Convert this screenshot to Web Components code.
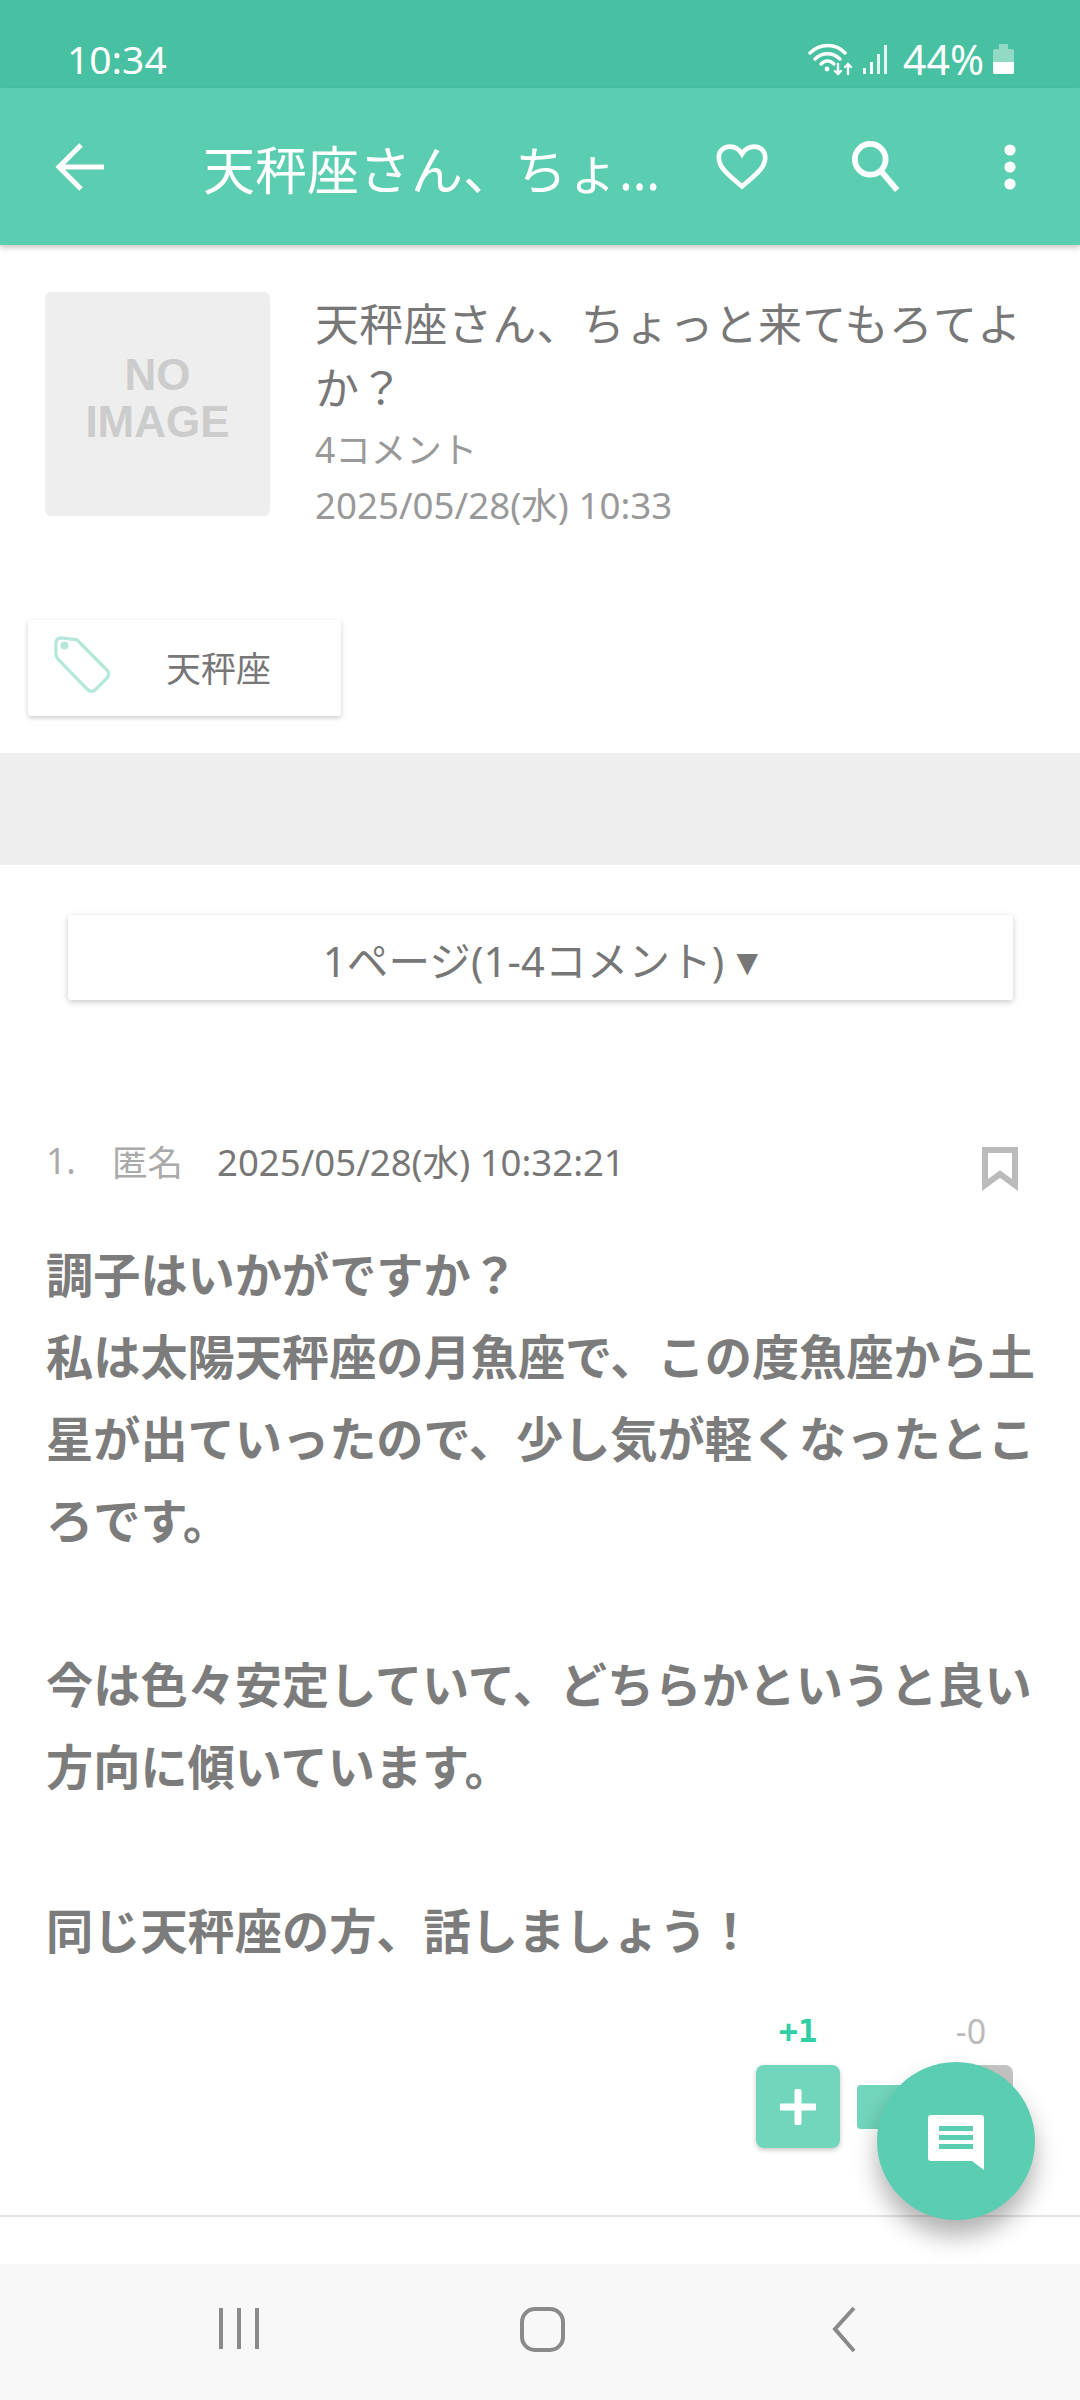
<!DOCTYPE html>
<html>
<head>
<meta charset="UTF-8">
<title>天秤座さん、ちょっと来てもろてよか？</title>
<style>
  html, body { margin: 0; padding: 0; }
  body {
    width: 1080px; height: 2400px; overflow: hidden; background: #fff; position: relative;
    display: flex; flex-direction: column;
    font-family: "Noto Sans", "Noto Sans CJK JP", sans-serif;
  }
</style>
<script type="module">
  // small helper, every element just sets its shadow markup
  class Base extends HTMLElement {
    constructor() {
      super();
      const template = document.createElement('template');
      template.innerHTML = this.constructor.markup;
      this.attachShadow({mode: 'open'});
      this.shadowRoot.appendChild(template.content.cloneNode(true));
    }
  }

  class StatusBar extends Base {
    static markup = `
      <style>
        :host { display: flex; height: 88px; box-sizing: border-box; padding: 0 65px 0 67px; align-items: center; justify-content: space-between; background: #47c1a1; color: #fff; }
        .time { font-size: 39px; padding-top: 29px; }
        .right { display: flex; align-items: center; padding-top: 29px; }
        .pct { font-size: 41px; margin: 0 8px 0 12px; }
        svg { display: block; }
      </style>
      <span class="time">10:34</span>
      <div class="right">
        <svg width="46" height="34" viewBox="0 0 46 34" fill="none" stroke="#fff" stroke-width="3.4" stroke-linecap="round">
          <path d="M2 11C12 1 28 1 37 11"/><path d="M7 17C14 10 25 10 32 17"/><path d="M13 22C17 18 22 18 26 22"/>
          <circle cx="19" cy="27" r="2.4" fill="#fff" stroke="none"/>
          <path stroke-width="2.4" d="M30 22V32M27 29l3 3 3-3M40 32V22M37 25l3-3 3 3"/>
        </svg>
        <svg width="30" height="34" viewBox="0 0 30 34" fill="#fff" style="margin-left:7px">
          <rect x="2" y="26" width="3" height="6" opacity=".9"/><rect x="9" y="20" width="3" height="12"/><rect x="16" y="12" width="3" height="20" opacity=".85"/><rect x="23" y="3" width="3" height="29" opacity=".85"/>
        </svg>
        <span class="pct">44%</span>
        <svg width="23" height="34" viewBox="0 0 23 34">
          <path d="M1 9Q1 7 3 7H7V2H16V7H20Q22 7 22 9V32H1Z" fill="#fff" opacity=".4"/>
          <path d="M1 20H22V30Q22 32 20 32H3Q1 32 1 30Z" fill="#fff"/>
        </svg>
      </div>`;
  }

  class AppBar extends Base {
    static markup = `
      <style>
        :host { display: flex; height: 157px; align-items: center; background: #5bcdb0; color: #fff; position: relative; box-shadow: 0 3px 5px rgba(0,0,0,.2); z-index: 2; }
        .back { margin-left: 54px; }
        .title { width: 462px; margin-left: 99px; flex: none; font-size: 52px; white-space: nowrap; line-height: 70px; margin-top: 7px; }
        .heart { margin-left: 51px; }
        .search { margin-left: 83px; }
        .dots { margin-left: 102px; }
        svg { display: block; flex: none; }
      </style>
      <svg class="back" width="50" height="50" viewBox="0 0 50 50" fill="none" stroke="#fff" stroke-width="5"><path d="M50 25H6M27 3L5 25l22 22"/></svg>
      <div class="title"><slot></slot></div>
      <svg class="heart" width="52" height="48" viewBox="0 0 56 50" fill="none" stroke="#fff" stroke-width="5"><path d="M28 46C14 34 3 26 3 15 3 7 9 3 15 3c6 0 10 3 13 8 3-5 7-8 13-8 6 0 12 4 12 12 0 11-11 19-25 31Z"/></svg>
      <svg class="search" width="50" height="54" viewBox="0 0 52 56" fill="none" stroke="#fff" stroke-width="6"><circle cx="20" cy="20" r="16"/><path d="M31 32L48 52"/></svg>
      <svg class="dots" width="14" height="46" viewBox="0 0 14 46" fill="#fff"><circle cx="7" cy="6" r="5.6"/><circle cx="7" cy="23" r="5.6"/><circle cx="7" cy="40" r="5.6"/></svg>`;
  }

  class ThreadHead extends Base {
    static markup = `
      <style>
        :host { display: flex; height: 375px; box-sizing: border-box; padding: 47px 45px 0; gap: 45px; }
        .thumb { flex: none; width: 225px; height: 224px; border-radius: 6px; background: #eee; color: #ccc; font: bold 44px/47px "Liberation Sans", sans-serif; text-align: center; display: flex; align-items: center; justify-content: center; box-sizing: border-box; padding-bottom: 12px; }
        .info { flex: 1; min-width: 0; }
        .title { font-size: 44px; line-height: 64px; color: #777; letter-spacing: 0.3px; }
        .sub { font-size: 35.5px; line-height: 56px; color: #999; }
        .sub.count { margin-top: 1px; }
        .sub.date { font-size: 36.7px; }
      </style>
      <div class="thumb">NO<br>IMAGE</div>
      <div class="info">
        <div class="title"><slot></slot></div>
        <div class="sub count"><slot name="count"></slot></div>
        <div class="sub date"><slot name="date"></slot></div>
      </div>`;
  }

  class TagChip extends Base {
    static markup = `
      <style>
        :host { display: flex; align-self: flex-start; width: 313px; height: 96px; margin-left: 28px; background: #fff; border-radius: 3px; box-shadow: 0 2px 5px rgba(0,0,0,.2); align-items: center; color: #777; font-size: 35px; }
        svg { display: block; margin-left: 26px; margin-top: -7px; flex: none; }
        span { margin-left: 55px; margin-top: -3px; }
      </style>
      <svg width="57" height="57" viewBox="0 0 60 60" fill="none" stroke="#b5e8da" stroke-width="3.5" stroke-linejoin="round">
        <path d="M8 2L24 4 56 36Q59 40 56 44L43 57Q39 60 35 56L4 24Q2 22 2 18V8Q2 2 8 2Z"/>
        <circle cx="11" cy="10" r="2.5" fill="#b5e8da"/>
      </svg>
      <span><slot></slot></span>`;
  }

  class PageSelect extends Base {
    static markup = `
      <style>
        :host { display: flex; height: 85px; margin: 50px 67px 0 68px; background: #fff; border-radius: 3px; box-shadow: 0 2px 6px rgba(0,0,0,.22); align-items: center; justify-content: center; color: #777; font-size: 41.5px; letter-spacing: .2px; }
        span { margin-top: 2px; }
        i { font-style: normal; font-size: 28px; margin-left: 12px; margin-top: 9px; font-family: "DejaVu Sans", sans-serif; }
      </style>
      <span><slot></slot></span><i>▼</i>`;
  }

  class ResItem extends Base {
    static markup = `
      <style>
        :host { display: block; margin-top: 130px; padding: 0 46px; }
        .head { display: flex; align-items: center; height: 60px; font-size: 35.5px; color: #777; }
        .muted { color: #aaa; }
        .no { width: 66px; }
        .name { width: 105px; }
        .date { font-size: 36.6px; }
        .mark { margin-left: auto; margin-right: 16px; display: block; margin-top: 18px; }
        .body { margin: 44px -6px 0 0; font-size: 47.2px; line-height: 82px; font-weight: 700; color: #7c7c7c; }
      </style>
      <div class="head">
        <span class="muted no"><slot name="no"></slot></span>
        <span class="muted name"><slot name="name"></slot></span>
        <span class="date"><slot name="date"></slot></span>
        <svg class="mark" width="36" height="44" viewBox="0 0 36 44" fill="none" stroke="#bbb" stroke-width="6"><path d="M3 3H33V38L18 27 3 38Z"/></svg>
      </div>
      <div class="body"><slot></slot></div>
      <slot name="votes"></slot>`;
  }

  class VoteRow extends Base {
    static markup = `
      <style>
        :host { display: flex; justify-content: flex-end; margin: 0 21px 0 0; padding-top: 26px; height: 243px; box-sizing: border-box; }
        .col { display: flex; flex-direction: column; align-items: center; width: 84px; }
        .n { height: 62px; font-size: 34px; line-height: 62px; font-weight: 700; margin-top: 2px; }
        .n.up { color: #2fcfa6; font-family: "DejaVu Sans Mono", monospace; font-size: 32px; }
        .n.down { color: #bbb; font-weight: 400; }
        .box { width: 84px; height: 83px; border-radius: 8px; display: flex; align-items: center; justify-content: center; margin-top: 3px; }
        .plus { background: #72d6bd; box-shadow: 0 2px 5px rgba(0,0,0,.22); }
        .minus { background: #c4c4c4; }
        .mid { width: 72px; height: 44px; background: #72d6bd; border-radius: 4px; margin: 87px 0 0 17px; flex: none; }
        svg { display: block; }
      </style>
      <div class="col"><div class="n up">+1</div><div class="box plus"><svg width="36" height="36" viewBox="0 0 36 36" fill="#fff"><rect x="14.500" y="0" width="7" height="36" rx="2"/><rect x="0" y="14.500" width="36" height="7" rx="1"/></svg></div></div>
      <div class="mid"></div>
      <div class="col"><div class="n down">-0</div><div class="box minus"></div></div>`;
  }

  class FabButton extends Base {
    static markup = `
      <style>
        :host { display: flex; position: absolute; left: 877px; top: 2062px; width: 158px; height: 158px; border-radius: 50%; background: #5bcdb0; align-items: center; justify-content: center; box-shadow: 0 16px 24px rgba(0,0,0,.3); z-index: 3; }
        svg { display: block; margin-top: 4px; margin-left: -1px; }
      </style>
      <svg width="56" height="56" viewBox="0 0 56 56"><path d="M3 0H53Q56 0 56 3V55L44 46H3Q0 46 0 43V3Q0 0 3 0Z" fill="#fff"/><path d="M11 11H45V16H11ZM11 20H45V25H11ZM11 29H45V34H11Z" fill="#5bcdb0"/></svg>`;
  }

  class NavBar extends Base {
    static markup = `
      <style>
        :host { display: flex; position: absolute; left: 0; right: 0; bottom: 0; height: 136px; background: #f8f8f8; z-index: 4; }
        svg { display: block; }
      </style>
      <svg width="1080" height="136" viewBox="0 2264 1080 136" fill="none" stroke="#8a8a8a" stroke-width="4">
        <path d="M221 2308V2349M239 2308V2349M257 2308V2349"/>
        <rect x="522" y="2309" width="41" height="41" rx="13"/>
        <path d="M854 2308L835 2329 854 2351" stroke-width="4"/>
      </svg>`;
  }

  class BottomLine extends Base {
    static markup = `<style>:host { display: block; height: 2px; background: #e4e4e4; }</style>`;
  }

  class GrayBand extends Base {
    static markup = `<style>:host { display: block; height: 112px; margin-top: 37px; background: #eee; }</style>`;
  }

  customElements.define('status-bar', StatusBar);
  customElements.define('app-bar', AppBar);
  customElements.define('thread-head', ThreadHead);
  customElements.define('tag-chip', TagChip);
  customElements.define('gray-band', GrayBand);
  customElements.define('page-select', PageSelect);
  customElements.define('res-item', ResItem);
  customElements.define('vote-row', VoteRow);
  customElements.define('bottom-line', BottomLine);
  customElements.define('fab-button', FabButton);
  customElements.define('nav-bar', NavBar);
</script>
</head>
<body>
  <status-bar></status-bar>
  <app-bar>天秤座さん、ちょ…</app-bar>
  <thread-head>天秤座さん、ちょっと来てもろてよか？<span slot="count">4コメント</span><span slot="date">2025/05/28(水) 10:33</span></thread-head>
  <tag-chip>天秤座</tag-chip>
  <gray-band></gray-band>
  <page-select>1ページ(1-4コメント)</page-select>
  <res-item>
    <span slot="no">1.</span><span slot="name">匿名</span><span slot="date">2025/05/28(水) 10:32:21</span>
    調子はいかがですか？<br>私は太陽天秤座の月魚座で、この度魚座から土星が出ていったので、少し気が軽くなったところです。<br><br>今は色々安定していて、どちらかというと良い方向に傾いています。<br><br>同じ天秤座の方、話しましょう！
    <vote-row slot="votes"></vote-row>
  </res-item>
  <bottom-line></bottom-line>
  <fab-button></fab-button>
  <nav-bar></nav-bar>
</body>
</html>
